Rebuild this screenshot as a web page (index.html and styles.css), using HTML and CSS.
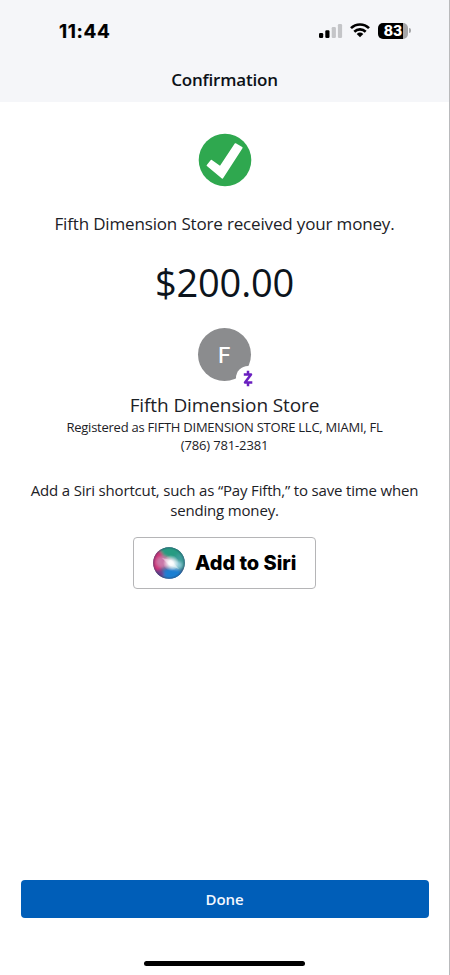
FILE: index.html
```html
<!DOCTYPE html>
<html lang="en">
<head>
<meta charset="utf-8">
<title>Confirmation</title>
<link rel="stylesheet" href="styles.css">
</head>
<body>
<div class="screen">
  <header class="top">
    <div class="status">
      <span class="time">11:44</span>
      <div class="indicators">
        <svg class="signal" width="24" height="16" viewBox="0 0 24 16">
          <rect x="0" y="10" width="4.2" height="5" rx="1.2"/>
          <rect x="6.3" y="7.2" width="4.2" height="7.8" rx="1.2"/>
          <rect x="12.7" y="4" width="4.2" height="11" rx="1.2" fill="#c4c5c8"/>
          <rect x="18.9" y="1" width="4.2" height="14" rx="1.2" fill="#c4c5c8"/>
        </svg>
        <svg class="wifi" width="20" height="15" viewBox="0 0 20 15" fill="none" stroke="#000" stroke-width="2.6">
          <path d="M1 5.2C6 .2 14 .2 19 5.2"/>
          <path d="M4.3 8.7C7.5 5.6 12.5 5.6 15.7 8.7"/>
          <path d="M10 14.2L6.7 11Q10 8.2 13.3 11Z" fill="#000" stroke="none"/>
        </svg>
        <div class="battery"><span>83</span></div>
        <i class="battery-cap"></i>
      </div>
    </div>
    <h1>Confirmation</h1>
  </header>
  <main>
    <svg class="check" width="54" height="54" viewBox="0 0 54 54">
      <circle cx="27" cy="27" r="26.3" fill="#2fa84f"/>
      <path d="M9.4 32.4L13.4 27.6L22.2 34L37.4 11L43.8 14.8L24.4 44.8Z" fill="#fff" stroke="#fff" stroke-width="1.6" stroke-linejoin="round"/>
    </svg>
    <p class="received">Fifth Dimension Store received your money.</p>
    <p class="amount">$200.00</p>
    <div class="avatar">F
      <span class="badge">
        <svg width="10" height="17" viewBox="0 0 10 17" fill="none" stroke="#6a1fc0" stroke-width="2.5">
          <path d="M.8 4.4H8L2 12.4H9.3" stroke-linejoin="round"/>
          <path d="M5 .8V4M5 12.5V16.2"/>
        </svg>
      </span>
    </div>
    <h2>Fifth Dimension Store</h2>
    <p class="registered">Registered as FIFTH DIMENSION STORE LLC, MIAMI, FL</p>
    <p class="phone">(786) 781-2381</p>
    <p class="hint">Add a Siri shortcut, such as “Pay Fifth,” to save time when<br>sending money.</p>
    <button class="siri" type="button">
      <svg width="32" height="32" viewBox="0 0 32 32">
        <defs>
          <clipPath id="orb"><circle cx="16" cy="16" r="15.8"/></clipPath>
          <filter id="soft" x="-50%" y="-50%" width="200%" height="200%"><feGaussianBlur stdDeviation="1.8"/></filter>
          <radialGradient id="glow"><stop offset="0" stop-color="#fff"/><stop offset=".3" stop-color="#fff" stop-opacity=".9"/><stop offset="1" stop-color="#fff" stop-opacity="0"/></radialGradient>
          <radialGradient id="rim"><stop offset=".84" stop-color="#253b5c" stop-opacity="0"/><stop offset="1" stop-color="#253b5c" stop-opacity=".45"/></radialGradient>
        </defs>
        <g clip-path="url(#orb)">
          <rect width="32" height="32" fill="#456391"/>
          <g filter="url(#soft)">
            <ellipse cx="20" cy="5" rx="14" ry="7" fill="#259b82"/>
            <ellipse cx="27" cy="15" rx="7" ry="8" fill="#3b9c98"/>
            <ellipse cx="4" cy="14" rx="7" ry="11" fill="#cf3378"/>
            <ellipse cx="10" cy="15" rx="7" ry="6" fill="#ca78a9"/>
            <ellipse cx="19" cy="27" rx="10" ry="6" fill="#1d7fd2"/>
            <ellipse cx="6" cy="27" rx="5" ry="4" fill="#6d3e8e"/>
            <ellipse cx="23" cy="18" rx="6" ry="4" fill="#91cbd9"/>
          </g>
          <circle cx="18" cy="16" r="8" fill="url(#glow)"/>
          <path d="M9 11L18 13L26 22L16 18Z" fill="#fff" opacity=".4"/>
          <circle cx="16" cy="16" r="16" fill="url(#rim)"/>
        </g>
      </svg>
      <span>Add to Siri</span>
    </button>
  </main>
  <footer>
    <button class="done" type="button">Done</button>
    <div class="home"></div>
  </footer>
</div>
</body>
</html>
```

FILE: styles.css
```css
* { box-sizing: border-box; margin: 0; padding: 0; }
body { background: #fff; font-family: "Open Sans", sans-serif; color: #1c2126; }
.screen {
  width: 450px; height: 975px;
  display: flex; flex-direction: column;
  border-right: 1px solid #b9babc;
  overflow: hidden;
}
.top { height: 102px; background: #f5f6f9; }
.status { height: 62px; display: flex; justify-content: space-between; padding: 0 38px 0 59px; align-items: center; }
.time { font: 700 19px/22px Inter, sans-serif; letter-spacing: .6px; color: #000; -webkit-text-stroke: .2px #000; padding-top: 1px; }
.indicators { display: flex; align-items: center; margin-top: -1px; }
.wifi { margin: 0 8px 0 7px; }
.battery {
  width: 30px; height: 16px; border-radius: 5px;
  background: linear-gradient(90deg, #000 83%, #a5a6a8 83%);
  color: #fff; font: 800 14px/16px Inter, sans-serif; text-align: center;
}
.battery-cap { width: 2px; height: 5px; margin-left: 1px; border-radius: 0 2px 2px 0; background: #a5a6a8; }
h1 { font-size: 17px; line-height: 24px; font-weight: 600; text-align: center; margin-top: 6px; white-space: nowrap; letter-spacing: -.2px; color: #0c1117; }
main { flex: 1; display: flex; flex-direction: column; align-items: center; text-align: center; white-space: nowrap; }
.check { margin-top: 31px; }
.received { font-size: 17px; line-height: 24px; margin-top: 25px; letter-spacing: -.16px; }
.amount { font-size: 38px; line-height: 50px; margin-top: 21px; color: #0c141c; letter-spacing: -.2px; }
.avatar {
  position: relative; width: 53px; height: 53px; margin-top: 21px; border-radius: 50%;
  background: #8b8c8e; color: #fff; font: 500 22px/54px Inter, sans-serif;
}
.badge {
  position: absolute; left: 38px; top: 38px; width: 24px; height: 24px; border-radius: 50%;
  background: #fff; display: flex; align-items: center; justify-content: center;
}
h2 { font-size: 19px; line-height: 26px; font-weight: 400; margin-top: 11px; letter-spacing: -.1px; }
.registered { font-size: 13px; line-height: 18px; letter-spacing: -.24px; }
.phone { font-size: 13px; line-height: 18px; letter-spacing: -.15px; }
.hint { font-size: 15px; line-height: 20px; margin-top: 26px; letter-spacing: -.17px; }
.siri {
  width: 183px; height: 52px; margin-top: 17px; padding-left: 19px;
  display: flex; align-items: center; gap: 10px;
  border: 1px solid #b5b5b7; border-radius: 4px; background: #fff;
  color: #000; font: 800 20px/26px Inter, sans-serif; letter-spacing: -.05px; white-space: nowrap;
}
footer { display: flex; flex-direction: column; align-items: center; height: 95px; }
.done {
  width: 408px; height: 38px; border: 0; border-radius: 4px;
  background: #005eb8; color: #f3f8ff; font: 600 15px/38px "Open Sans", sans-serif; letter-spacing: -.1px;
}
.home { width: 161px; height: 5px; border-radius: 3px; background: #000; margin-top: 43px; }
```
